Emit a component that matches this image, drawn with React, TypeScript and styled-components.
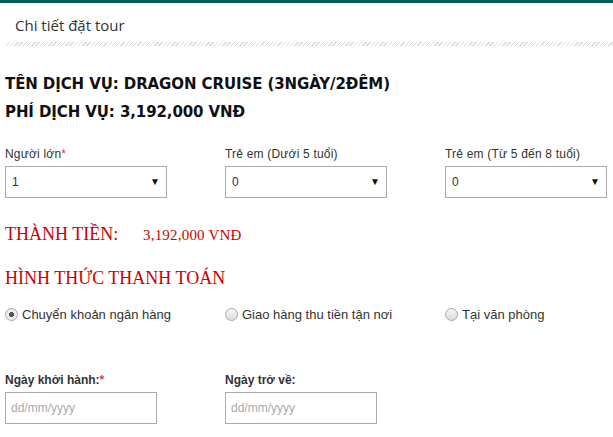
import React from "react";
import styled, { createGlobalStyle } from "styled-components";

const Global = createGlobalStyle`
  html, body { margin: 0; padding: 0; background: #fff; }
  body { font-family: "Liberation Sans", Arial, sans-serif; color: #333; }
`;

const Page = styled.div`
  width: 613px;
  min-height: 437px;
  background: #fff;
  border-top: 3px solid #045c57;
  box-sizing: border-box;
`;

const Title = styled.h2`
  margin: 11px 0 0 15px;
  font-family: "Open Sans", sans-serif;
  font-weight: 400;
  font-size: 15px;
  line-height: 22px;
  color: #333;
`;

const Hatch = styled.div`
  margin: 6px 0 0 5px;
  height: 4px;
  background: repeating-linear-gradient(
    135deg,
    #d8d8d8 0 1px,
    #ffffff 1px 3px
  );
`;

const Body = styled.div`
  padding: 0 5px;
`;

const Info = styled.div`
  margin-top: 24px;
  font-family: "DejaVu Sans", Verdana, sans-serif;
  font-weight: 700;
  font-size: 15px;
  letter-spacing: -0.1px;
  line-height: 28px;
  color: #111;
`;

const Grid = styled.div<{ $top: number }>`
  display: grid;
  grid-template-columns: 220px 220px 1fr;
  margin-top: ${(p) => p.$top}px;
`;

const Field = styled.div`
  display: flex;
  flex-direction: column;
  gap: 5px;
`;

const Label = styled.label<{ $strong?: boolean }>`
  font-family: "Liberation Sans", Arial, sans-serif;
  font-size: 12px;
  line-height: 14px;
  letter-spacing: ${(p) => (p.$strong ? "0" : "0.2px")};
  color: ${(p) => (p.$strong ? "#333" : "#333")};
  font-weight: ${(p) => (p.$strong ? 700 : 400)};
`;

const Req = styled.span`
  color: #e5383b;
`;

const SelectBox = styled.div`
  width: 162px;
  height: 32px;
  box-sizing: border-box;
  border: 1px solid #aaa;
  display: flex;
  align-items: center;
  justify-content: space-between;
  padding: 0 6px 0 6px;
  font-family: "Liberation Sans", Arial, sans-serif;
  font-size: 12px;
  color: #333;
`;

const Arrow = styled.span`
  font-size: 10px;
  color: #111;
  line-height: 1;
`;

const Total = styled.div`
  margin-top: 24px;
  display: flex;
  align-items: baseline;
  font-family: "Liberation Serif", "Times New Roman", serif;
  color: #cc0000;
  line-height: 24px;
`;

const TotalLabel = styled.span`
  font-size: 18px;
  width: 138px;
`;

const TotalValue = styled.span`
  font-size: 15px;
  letter-spacing: 0.2px;
`;

const SectionTitle = styled.div`
  margin-top: 19px;
  font-family: "Liberation Serif", "Times New Roman", serif;
  font-size: 18px;
  line-height: 24px;
  color: #cc0000;
`;

const RadioRow = styled.label`
  display: flex;
  align-items: center;
  gap: 4px;
  height: 20px;
  font-family: "Liberation Sans", Arial, sans-serif;
  font-size: 13px;
  color: #333;
`;

const Radio = styled.span<{ $checked?: boolean }>`
  width: 13px;
  height: 13px;
  box-sizing: border-box;
  border-radius: 50%;
  border: 1px solid #a8a8a8;
  background: ${(p) =>
    p.$checked
      ? "radial-gradient(circle, #555 0 2.3px, #ececec 2.8px)"
      : "linear-gradient(#f6f6f6, #dcdcdc)"};
  flex: none;
`;

const DateInput = styled.input`
  width: 152px;
  height: 32px;
  box-sizing: border-box;
  border: 1px solid #aaa;
  padding: 0 5px;
  font-family: "Liberation Sans", Arial, sans-serif;
  font-size: 12px;
  color: #333;
  outline: none;
  &::placeholder { color: #aaa; }
`;

export default function App() {
  return (
    <>
      <Global />
      <Page>
        <Title>Chi tiết đặt tour</Title>
        <Hatch />
        <Body>
          <Info>
            <div>TÊN DỊCH VỤ: DRAGON CRUISE (3NGÀY/2ĐÊM)</div>
            <div>PHÍ DỊCH VỤ: 3,192,000 VNĐ</div>
          </Info>
          <Grid $top={21}>
            <Field>
              <Label>
                Người lớn<Req>*</Req>
              </Label>
              <SelectBox>
                <span>1</span>
                <Arrow>▼</Arrow>
              </SelectBox>
            </Field>
            <Field>
              <Label>Trẻ em (Dưới 5 tuổi)</Label>
              <SelectBox>
                <span>0</span>
                <Arrow>▼</Arrow>
              </SelectBox>
            </Field>
            <Field>
              <Label>Trẻ em (Từ 5 đến 8 tuổi)</Label>
              <SelectBox>
                <span>0</span>
                <Arrow>▼</Arrow>
              </SelectBox>
            </Field>
          </Grid>
          <Total>
            <TotalLabel>THÀNH TIỀN:</TotalLabel>
            <TotalValue>3,192,000 VNĐ</TotalValue>
          </Total>
          <SectionTitle>HÌNH THỨC THANH TOÁN</SectionTitle>
          <Grid $top={14}>
            <RadioRow>
              <Radio $checked />
              Chuyển khoản ngân hàng
            </RadioRow>
            <RadioRow>
              <Radio />
              Giao hàng thu tiền tận nơi
            </RadioRow>
            <RadioRow>
              <Radio />
              Tại văn phòng
            </RadioRow>
          </Grid>
          <Grid $top={49}>
            <Field>
              <Label $strong>
                Ngày khởi hành:<Req>*</Req>
              </Label>
              <DateInput placeholder="dd/mm/yyyy" />
            </Field>
            <Field>
              <Label $strong>Ngày trở về:</Label>
              <DateInput placeholder="dd/mm/yyyy" />
            </Field>
          </Grid>
        </Body>
      </Page>
    </>
  );
}
